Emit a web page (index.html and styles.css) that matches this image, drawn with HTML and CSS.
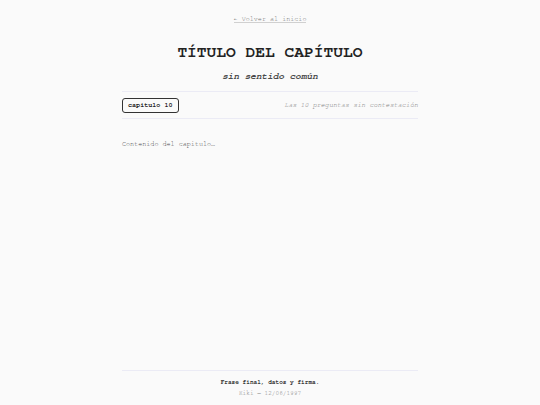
FILE: index.html
```html
<!DOCTYPE html>
<html lang="es">
<head>
<meta charset="utf-8">
<title>Título del capítulo</title>
<link rel="stylesheet" href="styles.css">
</head>
<body>
<div class="page">
  <nav class="back"><a href="#" class="back-link">← Volver al inicio</a></nav>
  <header class="head">
    <h1 class="title">TÍTULO DEL CAPÍTULO</h1>
    <p class="subtitle">sin sentido común</p>
  </header>
  <div class="meta">
    <span class="badge">capitulo 10</span>
    <span class="meta-note">Las 10 preguntas sin contestación</span>
  </div>
  <main class="content">
    <p>Contenido del capitulo…</p>
  </main>
  <footer class="foot">
    <p class="foot-line">Frase final, datos y firma.</p>
    <p class="foot-sign">Kiki — 12/06/1997</p>
  </footer>
</div>
</body>
</html>
```
FILE: styles.css
```css
html, body {
  margin: 0;
  padding: 0;
}
body {
  background: #fafafa;
  color: #222;
  font-family: "Nimbus Mono PS", "Nimbus Mono L", "FreeMono", "Courier", "Courier New", "Liberation Mono", monospace;
}
.page {
  width: 296px;
  margin: 0 auto;
  min-height: 405px;
  display: flex;
  flex-direction: column;
}
.back {
  text-align: center;
  padding-top: 14px;
  font-size: 6.75px;
  line-height: 11px;
}
.back-link {
  color: #6f6f6f;
  text-decoration: none;
  border-bottom: 1px solid #d0d0d0;
}
.head {
  text-align: center;
}
.title {
  margin: 17px 0 0;
  font-size: 16.25px;
  line-height: 21px;
  font-weight: bold;
  color: #222;
}
.subtitle {
  margin: 7px 0 0;
  font-size: 9.4px;
  line-height: 12px;
  font-style: italic;
  font-weight: bold;
  color: #4a4a4a;
}
.meta {
  margin-top: 9px;
  display: flex;
  justify-content: space-between;
  align-items: center;
  padding: 5.5px 0;
  border-top: 1px solid #ebebf5;
  border-bottom: 1px solid #ebebf5;
  font-size: 6.75px;
  line-height: 11px;
}
.badge {
  border: 1px solid #333;
  border-radius: 3px;
  padding: 1px 5px;
  font-weight: bold;
  color: #222;
}
.meta-note {
  font-style: italic;
  color: #808080;
}
.content {
  margin-top: 20px;
  font-size: 6.75px;
  line-height: 11px;
  color: #444;
}
.content p {
  margin: 0;
}
.foot {
  margin-top: auto;
  border-top: 1px solid #ebebf5;
  padding: 6px 0;
  text-align: center;
  font-size: 6.1px;
  line-height: 11px;
}
.foot p {
  margin: 0;
}
.foot-line {
  font-weight: bold;
  color: #333;
}
.foot-sign {
  color: #808080;
}
```
